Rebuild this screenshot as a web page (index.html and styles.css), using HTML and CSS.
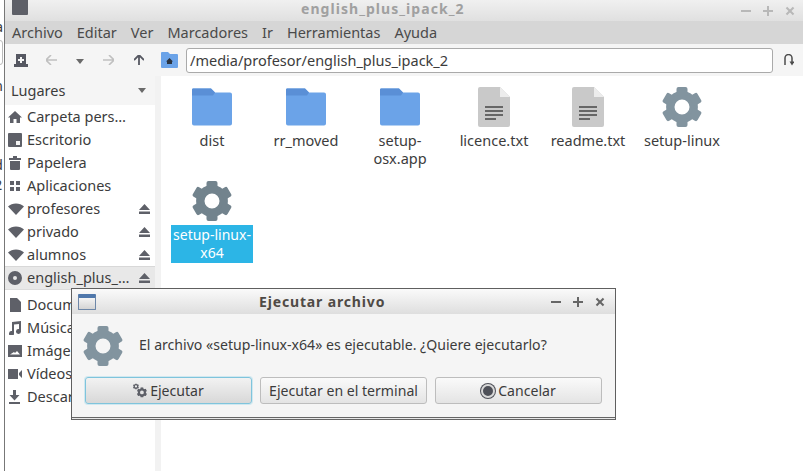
FILE: index.html
```html
<!DOCTYPE html>
<html lang="en">
<head>
    <meta charset="UTF-8">
    <title>english_plus_ipack_2</title>
    <link rel="stylesheet" href="styles.css">
</head>
<body>
    <svg class="defs" width="0" height="0">
        <symbol id="gear" viewBox="0 0 40 40">
            <circle cx="20" cy="20" r="11.7" fill="none" stroke="currentColor" stroke-width="8.4"/>
            <g fill="currentColor">
                <rect x="14.5" y="0" width="11" height="9" rx="2"/>
                <rect x="14.5" y="0" width="11" height="9" rx="2" transform="rotate(60 20 20)"/>
                <rect x="14.5" y="0" width="11" height="9" rx="2" transform="rotate(120 20 20)"/>
                <rect x="14.5" y="0" width="11" height="9" rx="2" transform="rotate(180 20 20)"/>
                <rect x="14.5" y="0" width="11" height="9" rx="2" transform="rotate(240 20 20)"/>
                <rect x="14.5" y="0" width="11" height="9" rx="2" transform="rotate(300 20 20)"/>
            </g>
        </symbol>
        <symbol id="folder" viewBox="0 0 40 37">
            <path d="M1 0h18l4 4h15a2 2 0 0 1 2 2v29a2 2 0 0 1-2 2H2a2 2 0 0 1-2-2V1z" fill="#6ba3e8"/>
            <path d="M0 1a1 1 0 0 1 1-1h18l4 4-2 3H0z" fill="#5a8fd6"/>
        </symbol>
        <symbol id="doc" viewBox="0 0 32 40">
            <path d="M2 0h20l10 10v28a2 2 0 0 1-2 2H2a2 2 0 0 1-2-2V2a2 2 0 0 1 2-2z" fill="#c9c9c9"/>
            <path d="M22 0l10 10H22z" fill="#ececec"/>
            <path d="M7 19h18v2H7zM7 23h18v2H7zM7 27h18v2H7zM7 31h11v2H7z" fill="#666"/>
        </symbol>
        <symbol id="wifi" viewBox="0 0 16 12">
            <path d="M0 3.500C2 1.500 5 .5 8 .5s6 1 8 3L8 12z" fill="currentColor"/>
        </symbol>
        <symbol id="eject" viewBox="0 0 11 10">
            <path d="M5.500 0L11 6H0zM0 7.500h11V10H0z" fill="currentColor"/>
        </symbol>
    </svg>

    <div class="peek">
        <span class="peek-a">a</span>
        <span class="peek-box"></span>
        <span class="peek-n">n</span>
        <span class="peek-d">d</span>
        <span class="peek-2">2</span>
    </div>

    <div class="window">
        <div class="titlebar">
            <svg class="title-icon" width="16" height="15" viewBox="0 0 16 15"><path d="M0 0h16v14a1 1 0 0 1-1 1H1a1 1 0 0 1-1-1z" fill="#5e6068"/></svg>
            <span class="title-text">english_plus_ipack_2</span>
            <div class="wm-buttons">
                <span class="wm-min"></span>
                <span class="wm-max"></span>
                <span class="wm-close"></span>
            </div>
        </div>

        <div class="menubar">
            <span>Archivo</span>
            <span>Editar</span>
            <span>Ver</span>
            <span>Marcadores</span>
            <span>Ir</span>
            <span>Herramientas</span>
            <span>Ayuda</span>
        </div>

        <div class="toolbar">
            <svg class="tool tool-bookmark" width="14" height="13" viewBox="0 0 14 13"><path d="M2 0h10v10h2v3H0v-3h2z" fill="#565862"/><path d="M6 3h2v2h2v2H8v2H6V7H4V5h2z" fill="#f5f5f5"/></svg>
            <svg class="tool tool-back" width="11" height="10" viewBox="0 0 11 10"><path d="M5 0L0 5l5 5M0 5h11" fill="none" stroke="#c0c0c0" stroke-width="1.600"/></svg>
            <svg class="tool tool-drop" width="8" height="5" viewBox="0 0 8 5"><path d="M0 0h8L4 5z" fill="#6a6a6a"/></svg>
            <svg class="tool tool-fwd" width="11" height="10" viewBox="0 0 11 10"><path d="M6 0l5 5-5 5M11 5H0" fill="none" stroke="#c0c0c0" stroke-width="1.600"/></svg>
            <svg class="tool tool-up" width="10" height="10" viewBox="0 0 10 10"><path d="M0 5l5-5 5 5M5 0v10" fill="none" stroke="#565862" stroke-width="1.800"/></svg>
            <svg class="tool tool-home" width="17" height="16" viewBox="0 0 17 16"><path d="M0 1a1 1 0 0 1 1-1h6l2 2h7a1 1 0 0 1 1 1v12a1 1 0 0 1-1 1H1a1 1 0 0 1-1-1z" fill="#6ba3e8"/><path d="M8.500 6L12 9.500h-1V12H6V9.500H5z" fill="#2b3440"/></svg>
            <div class="path-entry">/media/profesor/english_plus_ipack_2</div>
            <svg class="tool tool-reload" width="10" height="12" viewBox="0 0 10 12"><path d="M1 11V4a3.500 3.500 0 0 1 7 0v4" fill="none" stroke="#4c4c4c" stroke-width="1.500"/><path d="M5.500 7.500h5L8 11.500z" fill="#4c4c4c"/></svg>
        </div>

        <div class="panes">
            <div class="sidebar">
                <div class="places-head">
                    <span>Lugares</span>
                    <span class="places-arrow"></span>
                </div>
                <div class="places">
                    <div class="place">
                        <svg class="place-icon" viewBox="0 0 14 14"><path d="M7 1L0 7.500h2V13h3.500V9h3v4H12V7.500h2z" fill="#5e6068"/></svg>
                        <span class="place-name">Carpeta pers…</span>
                    </div>
                    <div class="place">
                        <svg class="place-icon" viewBox="0 0 14 14"><path d="M1 0h12a1 1 0 0 1 1 1v12a1 1 0 0 1-1 1H1a1 1 0 0 1-1-1V1a1 1 0 0 1 1-1z" fill="#5e6068"/><path d="M8 8h4v4H8z" fill="#f5f5f5"/></svg>
                        <span class="place-name">Escritorio</span>
                    </div>
                    <div class="place">
                        <svg class="place-icon" viewBox="0 0 14 14"><path d="M1 2h12v2H1zM5 0h4v2H5zM2 5h10v8a1 1 0 0 1-1 1H3a1 1 0 0 1-1-1z" fill="#5e6068"/></svg>
                        <span class="place-name">Papelera</span>
                    </div>
                    <div class="place">
                        <svg class="place-icon" viewBox="0 0 14 14"><path d="M2 2h4v4H2zM8 2h4v4H8zM2 8h4v4H2zM8 8h4v4H8z" fill="#5e6068"/></svg>
                        <span class="place-name">Aplicaciones</span>
                    </div>
                    <div class="place">
                        <svg class="place-icon wifi-icon"><use href="#wifi"/></svg>
                        <span class="place-name">profesores</span>
                        <svg class="eject-icon"><use href="#eject"/></svg>
                    </div>
                    <div class="place">
                        <svg class="place-icon wifi-icon"><use href="#wifi"/></svg>
                        <span class="place-name">privado</span>
                        <svg class="eject-icon"><use href="#eject"/></svg>
                    </div>
                    <div class="place">
                        <svg class="place-icon wifi-icon"><use href="#wifi"/></svg>
                        <span class="place-name">alumnos</span>
                        <svg class="eject-icon"><use href="#eject"/></svg>
                    </div>
                    <div class="place place-active">
                        <svg class="place-icon" viewBox="0 0 14 14"><path fill-rule="evenodd" d="M7 0a7 7 0 1 1 0 14A7 7 0 0 1 7 0zm0 5a2 2 0 1 0 0 4 2 2 0 0 0 0-4z" fill="#5e6068"/></svg>
                        <span class="place-name">english_plus_…</span>
                        <svg class="eject-icon"><use href="#eject"/></svg>
                    </div>
                    <div class="places-sep"></div>
                    <div class="place">
                        <svg class="place-icon" viewBox="0 0 14 14"><path d="M2 0h7l4 4v10H2z" fill="#5e6068"/></svg>
                        <span class="place-name">Documentos</span>
                    </div>
                    <div class="place">
                        <svg class="place-icon" viewBox="0 0 14 14"><path d="M4 1l9-1v10.500a2.500 2.500 0 1 1-2-2.400V3L6 3.600v8.900a2.500 2.500 0 1 1-2-2.400z" fill="#5e6068"/></svg>
                        <span class="place-name">Música</span>
                    </div>
                    <div class="place">
                        <svg class="place-icon" viewBox="0 0 14 14"><path fill-rule="evenodd" d="M0 1h14v12H0zM2 10.500h10L9 7l-2 2-1-1z" fill="#5e6068"/></svg>
                        <span class="place-name">Imágenes</span>
                    </div>
                    <div class="place">
                        <svg class="place-icon" viewBox="0 0 14 14"><path d="M0 2h10v10H0zM11 6l3-3v8l-3-3z" fill="#5e6068"/></svg>
                        <span class="place-name">Vídeos</span>
                    </div>
                    <div class="place">
                        <svg class="place-icon" viewBox="0 0 14 14"><path d="M5 0h3v5h3.500L6.500 10.500 1.500 5H5zM1 12h11v2H1z" fill="#5e6068"/></svg>
                        <span class="place-name">Descargas</span>
                    </div>
                </div>
            </div>

            <div class="files">
                <div class="file">
                    <svg class="file-icon folder-icon"><use href="#folder"/></svg>
                    <span class="file-name">dist</span>
                </div>
                <div class="file">
                    <svg class="file-icon folder-icon"><use href="#folder"/></svg>
                    <span class="file-name">rr_moved</span>
                </div>
                <div class="file">
                    <svg class="file-icon folder-icon"><use href="#folder"/></svg>
                    <span class="file-name">setup-<br>osx.app</span>
                </div>
                <div class="file">
                    <svg class="file-icon doc-icon"><use href="#doc"/></svg>
                    <span class="file-name">licence.txt</span>
                </div>
                <div class="file">
                    <svg class="file-icon doc-icon"><use href="#doc"/></svg>
                    <span class="file-name">readme.txt</span>
                </div>
                <div class="file">
                    <svg class="file-icon gear-icon"><use href="#gear"/></svg>
                    <span class="file-name">setup-linux</span>
                </div>
                <div class="file">
                    <svg class="file-icon gear-icon gear-dark"><use href="#gear"/></svg>
                    <span class="file-name file-selected">setup-linux-<br>x64</span>
                </div>
            </div>
        </div>
    </div>

    <div class="dialog">
        <div class="dialog-title">
            <span class="dialog-winicon"></span>
            <span class="dialog-title-text">Ejecutar archivo</span>
            <div class="wm-buttons dialog-wm">
                <span class="wm-min"></span>
                <span class="wm-max"></span>
                <span class="wm-close"></span>
            </div>
        </div>
        <div class="dialog-body">
            <div class="dialog-msg">
                <svg class="dialog-gear"><use href="#gear"/></svg>
                <span class="dialog-text">El archivo «setup-linux-x64» es ejecutable. ¿Quiere ejecutarlo?</span>
            </div>
            <div class="dialog-buttons">
                <button class="btn btn-default" type="button">
                    <svg width="14" height="15" viewBox="0 0 40 40"><use href="#gear" x="11" y="11" width="29" height="29"/><use href="#gear" x="0" y="0" width="17" height="17"/></svg>
                    Ejecutar
                </button>
                <button class="btn" type="button">Ejecutar en el terminal</button>
                <button class="btn" type="button">
                    <span class="cancel-icon"></span>
                    Cancelar
                </button>
            </div>
        </div>
        <div class="dialog-foot"></div>
    </div>
</body>
</html>
```

FILE: styles.css
```css
* {
    box-sizing: border-box;
}
html, body {
    height: 100%;
}
body {
    margin: 0;
    padding-left: 4px;
    background-color: white;
    font-family: "Noto Sans", sans-serif;
    font-size: 14.5px;
    color: #3c3c3c;
    overflow: hidden;
}
.defs {
    position: absolute;
}

/* bits of the window behind, showing left of the file manager */
.peek {
    position: absolute;
    left: 0;
    top: 0;
    width: 4px;
    height: 100%;
    overflow: hidden;
}
.peek span {
    position: absolute;
    line-height: 13px;
}
.peek-a {
    left: -5px;
    top: 20px;
}
.peek-box {
    left: -6px;
    top: 40px;
    width: 9px;
    height: 25px;
    background-color: white;
    border: 1px solid #bbb;
    border-radius: 3px;
}
.peek-n {
    left: -6px;
    top: 79px;
}
.peek-d {
    left: -6px;
    top: 158px;
}
.peek-2 {
    left: -6px;
    top: 178px;
}

.window {
    height: 100%;
    display: flex;
    flex-direction: column;
    border-left: 1px solid #777;
}

/* title bar */
.titlebar {
    height: 21px;
    display: flex;
    align-items: center;
    position: relative;
    background: linear-gradient(#f0f0f0, #e0e0e0);
}
.title-icon {
    margin: 0 0 6px 7px;
}
.title-text {
    position: absolute;
    left: 296px;
    top: 0;
    font-size: 14px;
    font-weight: bold;
    line-height: 17px;
    letter-spacing: 1.05px;
    color: #a0a0a0;
}
.wm-buttons {
    margin-left: auto;
    margin-right: 8px;
    display: flex;
    gap: 12px;
    color: #b8b8b8;
}
.wm-buttons span {
    width: 10px;
    height: 10px;
    position: relative;
}
.wm-min::before, .wm-max::before, .wm-max::after, .wm-close::before, .wm-close::after {
    content: "";
    position: absolute;
    left: 0;
    top: 4px;
    width: 10px;
    height: 2px;
    background-color: currentColor;
}
.wm-max::after {
    transform: rotate(90deg);
}
.wm-close::before {
    transform: rotate(45deg);
}
.wm-close::after {
    transform: rotate(-45deg);
}

/* menu */
.menubar {
    height: 23px;
    padding: 0 0 2px 7px;
    display: flex;
    align-items: center;
    gap: 14px;
    background-color: #d6d6d6;
    color: #4a4a4a;
}

/* toolbar */
.toolbar {
    height: 32px;
    display: flex;
    align-items: center;
    background-color: #f5f5f5;
}
.tool-bookmark {
    margin-left: 9px;
}
.tool-back {
    margin-left: 18px;
}
.tool-drop {
    margin-left: 19px;
    margin-top: 2px;
}
.tool-fwd {
    margin-left: 19px;
}
.tool-up {
    margin-left: 20px;
}
.tool-home {
    margin-left: 17px;
}
.path-entry {
    width: 587px;
    height: 25px;
    margin-left: 8px;
    padding-left: 3px;
    line-height: 23px;
    background-color: white;
    border: 1px solid #aaa;
    border-radius: 3px;
}
.tool-reload {
    margin-left: 11px;
}

/* panes */
.panes {
    flex: 1;
    display: flex;
    min-height: 0;
}
.sidebar {
    width: 156px;
    border-right: 6px solid #f2f2f2;
    background-color: white;
}
.places-head {
    height: 29px;
    padding: 0 9px 2px 6px;
    display: flex;
    align-items: center;
    justify-content: space-between;
    background-color: #f5f5f5;
}
.places-arrow {
    width: 0;
    height: 0;
    margin-top: 2px;
    border-left: 4px solid transparent;
    border-right: 4px solid transparent;
    border-top: 5px solid #6a6a6a;
}
.place {
    height: 23px;
    padding-left: 3px;
    display: flex;
    align-items: center;
}
.place-icon {
    width: 14px;
    height: 14px;
    flex: none;
    color: #5e6068;
}
.wifi-icon {
    width: 16px;
    height: 12px;
}
.place-name {
    position: absolute;
    margin: -2px 0 0 19px;
    white-space: nowrap;
}
.eject-icon {
    width: 11px;
    height: 10px;
    margin-left: auto;
    margin-right: 5px;
    color: #5e6068;
}
.place-active {
    background-color: #e8e8e8;
    border-top: 1px solid #d8d8d8;
}
.places-sep {
    height: 4px;
    margin-top: 0;
    border-top: 1px solid #dcdcdc;
}

/* file view */
.files {
    flex: 1;
    padding: 11px 0 0 4px;
    display: grid;
    grid-template-columns: repeat(6, 94px);
    grid-auto-rows: 94px;
    justify-items: center;
    align-content: start;
    background-color: white;
}
.file {
    display: flex;
    flex-direction: column;
    align-items: center;
    width: 94px;
}
.file-icon {
    width: 40px;
    height: 40px;
    flex: none;
}
.doc-icon {
    width: 32px;
}
.gear-icon {
    color: #82949f;
}
.gear-dark {
    color: #72838d;
}
.file-name {
    margin-top: 4px;
    padding: 0 2px;
    text-align: center;
    line-height: 18px;
    white-space: nowrap;
}
.file-selected {
    width: 82px;
    padding: 1px 0;
    margin-top: 4px;
    background-color: #2cb5e6;
    color: white;
    font-size: 14px;
    line-height: 18px;
}

/* dialog */
.dialog {
    position: absolute;
    left: 71px;
    top: 288px;
    width: 545px;
    height: 132px;
    display: flex;
    flex-direction: column;
    background-color: #f5f5f5;
    border: 1px solid #5f5f5f;
    border-bottom: 0;
}
.dialog-title {
    height: 25px;
    flex: none;
    display: flex;
    align-items: center;
    position: relative;
    background: linear-gradient(#fafafa, #dedede);
}
.dialog-winicon {
    width: 18px;
    height: 16px;
    margin-left: 6px;
    border: 1px solid #6d87a8;
    border-top: 4px solid #4f77ab;
    border-radius: 1px;
    background: linear-gradient(#f4f4f4, #d4d4d4);
}
.dialog-title-text {
    position: absolute;
    left: 187px;
    font-size: 14px;
    font-weight: bold;
    letter-spacing: 0.85px;
    color: #4f4a45;
}
.dialog-wm {
    margin-right: 10px;
    gap: 12px;
    color: #666;
}
.dialog-body {
    flex: 1;
    display: flex;
    flex-direction: column;
}
.dialog-msg {
    height: 63px;
    flex: none;
    display: flex;
    align-items: center;
    padding-left: 11px;
}
.dialog-gear {
    width: 40px;
    height: 40px;
    color: #82949f;
}
.dialog-text {
    margin-left: 16px;
    font-size: 14.1px;
    margin-top: -2px;
}
.dialog-buttons {
    padding-left: 13px;
    display: flex;
    gap: 8px;
}
.btn {
    width: 167px;
    height: 27px;
    padding: 0;
    display: flex;
    align-items: center;
    justify-content: center;
    gap: 3px;
    font-family: inherit;
    font-size: 14.1px;
    color: #3c3c3c;
    background: linear-gradient(#fafafa, #e4e4e4);
    border: 1px solid #bdbdbd;
    border-radius: 3px;
}
.btn-default {
    border-color: #7fc4dc;
    box-shadow: 0 0 0 1px #d0e8f0;
    background: linear-gradient(#f2f2f2, #d8d8d8);
}
.btn-default svg {
    color: #5e6068;
}
.cancel-icon {
    width: 14px;
    height: 14px;
    border-radius: 50%;
    background-color: #4e5058;
    border: 2px solid #d8d8d8;
    box-shadow: 0 0 0 1px #4e5058;
}
.dialog-foot {
    height: 3px;
    flex: none;
    border-top: 1px solid #666;
    border-bottom: 1px solid #666;
    background-color: #e8e8e8;
}
```
